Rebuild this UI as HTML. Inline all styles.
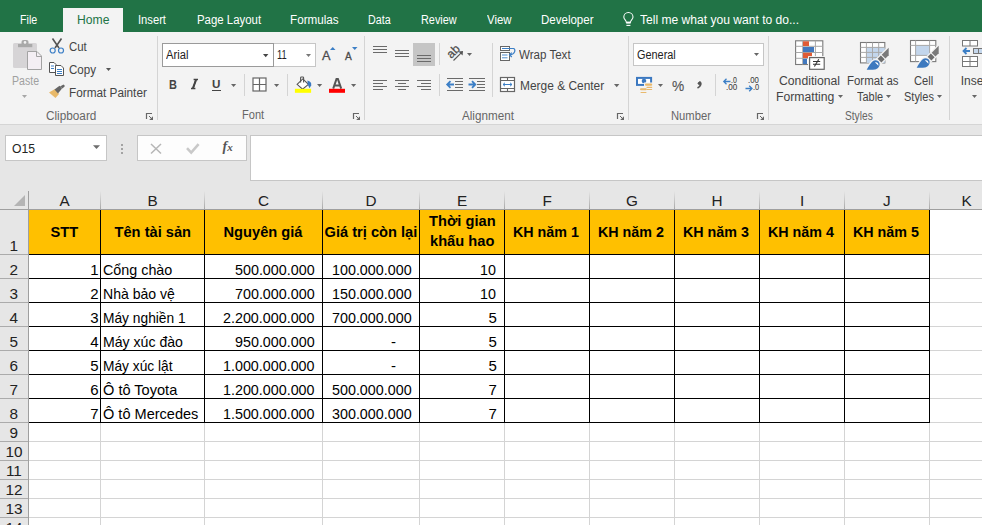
<!DOCTYPE html>
<html><head><meta charset="utf-8"><title>Excel</title><style>
*{margin:0;padding:0;box-sizing:border-box}
html,body{width:982px;height:525px;overflow:hidden;background:#fff;font-family:"Liberation Sans",sans-serif}
.a{position:absolute}
.t{position:absolute;white-space:pre;line-height:1}
svg{position:absolute;overflow:visible}
</style></head><body>
<div class="a" style="left:0px;top:0px;width:982px;height:32px;background:#217346;"></div><div class="a" style="left:63px;top:8px;width:60px;height:24px;background:#f3f3f3;"></div><div class="t" style="left:20.40px;top:13.84px;font-size:12px;color:#fff;transform:scaleX(0.8900);transform-origin:0 0;">File</div><div class="t" style="left:138.20px;top:13.84px;font-size:12px;color:#fff;transform:scaleX(0.9323);transform-origin:0 0;">Insert</div><div class="t" style="left:196.50px;top:13.84px;font-size:12px;color:#fff;transform:scaleX(0.9515);transform-origin:0 0;">Page Layout</div><div class="t" style="left:290.30px;top:13.84px;font-size:12px;color:#fff;transform:scaleX(0.9740);transform-origin:0 0;">Formulas</div><div class="t" style="left:368.00px;top:13.84px;font-size:12px;color:#fff;transform:scaleX(0.8923);transform-origin:0 0;">Data</div><div class="t" style="left:421.40px;top:13.84px;font-size:12px;color:#fff;transform:scaleX(0.9075);transform-origin:0 0;">Review</div><div class="t" style="left:487.30px;top:13.84px;font-size:12px;color:#fff;transform:scaleX(0.9500);transform-origin:0 0;">View</div><div class="t" style="left:541.00px;top:13.84px;font-size:12px;color:#fff;transform:scaleX(0.9600);transform-origin:0 0;">Developer</div><div class="t" style="left:76.60px;top:13.84px;font-size:12px;color:#217346;transform:scaleX(1.0125);transform-origin:0 0;">Home</div><div class="t" style="left:640.00px;top:13.84px;font-size:12px;color:#fff;transform:scaleX(1.0063);transform-origin:0 0;">Tell me what you want to do...</div><svg style="left:622px;top:11px" width="13" height="16" viewBox="0 0 13 16"><path d="M4.3,11.2 C4.3,9.3 1.8,8.4 1.8,6 A4.6,4.6 0 1 1 11,6 C11,8.4 8.5,9.3 8.5,11.2 Z" fill="none" stroke="#fff" stroke-width="1.05"/><rect x="4.2" y="10.8" width="4.4" height="1.8" fill="#fff"/><path d="M4.4,14.4 H8.4" stroke="#fff" stroke-width="1.1"/></svg><div class="a" style="left:0px;top:32px;width:982px;height:92px;background:#f3f3f3;"></div><div class="a" style="left:0px;top:124px;width:982px;height:1px;background:#d5d5d5;"></div><div class="a" style="left:157px;top:36px;width:1px;height:84px;background:#d4d4d4;"></div><div class="a" style="left:364px;top:36px;width:1px;height:84px;background:#d4d4d4;"></div><div class="a" style="left:628px;top:36px;width:1px;height:84px;background:#d4d4d4;"></div><div class="a" style="left:768px;top:36px;width:1px;height:84px;background:#d4d4d4;"></div><div class="a" style="left:949px;top:36px;width:1px;height:84px;background:#d4d4d4;"></div><svg style="left:12px;top:39px" width="31" height="32" viewBox="0 0 31 32"><rect x="1" y="4" width="24" height="25" rx="1.5" fill="#d6d4d6"/><rect x="9.5" y="1" width="7" height="6" rx="2" fill="#a9a9a9"/><rect x="6" y="5" width="14.3" height="3.2" fill="#a9a9a9"/><circle cx="13" cy="3.4" r="1.3" fill="#f3f3f3"/><path d="M15.5,12.5 H25 L29.5,17 V30.5 H15.5 Z" fill="#f4eff4" stroke="#a3a3a3" stroke-width="1"/><path d="M24.5,12.5 V17.5 H29.5" fill="none" stroke="#a3a3a3" stroke-width="1"/></svg><div class="t" style="left:11.70px;top:74.84px;font-size:12px;color:#a0a0a0;transform:scaleX(0.8806);transform-origin:0 0;">Paste</div><svg style="left:22px;top:95px" width="6" height="4.0" viewBox="0 0 6 4.0"><polygon points="0,0 5,0 2.5,3.0" fill="#a6a6a6"/></svg><svg style="left:49px;top:37px" width="16" height="17" viewBox="0 0 16 17"><path d="M3.5,1.5 L10,11 M12.5,1.5 L6,11" stroke="#555" stroke-width="1.6" fill="none"/><circle cx="3.7" cy="13.5" r="2.5" fill="none" stroke="#3c7fc6" stroke-width="1.2"/><circle cx="12" cy="13.5" r="2.5" fill="none" stroke="#3c7fc6" stroke-width="1.2"/></svg><div class="t" style="left:68.70px;top:40.84px;font-size:12px;color:#444;transform:scaleX(0.9526);transform-origin:0 0;">Cut</div><svg style="left:49px;top:62px" width="16" height="15" viewBox="0 0 16 15"><path d="M0.5,0.5 H5 L7,2.5 V10.5 H0.5 Z" fill="#fff" stroke="#555" stroke-width="1"/><path d="M6.5,3.5 H12 L14.5,6 V13.5 H6.5 Z" fill="#fff" stroke="#555" stroke-width="1"/><path d="M2,4 H5 M2,6.5 H5 M8,7.5 H13 M8,9.5 H13 M8,11.5 H13" stroke="#3c7fc6" stroke-width="1"/></svg><div class="t" style="left:68.70px;top:64.24px;font-size:12px;color:#444;transform:scaleX(0.9643);transform-origin:0 0;">Copy</div><svg style="left:106px;top:68px" width="6" height="4.0" viewBox="0 0 6 4.0"><polygon points="0,0 5,0 2.5,3.0" fill="#555"/></svg><svg style="left:48px;top:84px" width="18" height="15" viewBox="0 0 18 15"><path d="M1,8.5 L7,5 L11,10 L7.5,14 Z" fill="#e8b96a"/><path d="M6.5,5.5 L11.5,1.8 L14,4.5 L10,9.5 Z" fill="#666"/><path d="M12,2.5 L15.5,0.5 L17,2 L14.5,4.5 Z" fill="#666"/></svg><div class="t" style="left:68.70px;top:86.54px;font-size:12px;color:#444;transform:scaleX(0.9810);transform-origin:0 0;">Format Painter</div><div class="t" style="left:45.70px;top:109.84px;font-size:12px;color:#666;transform:scaleX(0.9804);transform-origin:0 0;">Clipboard</div><svg style="left:146px;top:113px" width="8" height="8" viewBox="0 0 8 8"><path d="M0.5,6 V0.5 H6" stroke="#666" stroke-width="1.2" fill="none"/><polygon points="7,3.2 7,7 3.2,7" fill="#666"/><path d="M3,3 L6,6" stroke="#666" stroke-width="1"/></svg><div class="a" style="left:162px;top:43px;width:112px;height:24px;background:#fff;border:1px solid #9a9a9a;"></div><div class="t" style="left:165.80px;top:49.04px;font-size:12px;color:#222;transform:scaleX(0.9333);transform-origin:0 0;">Arial</div><svg style="left:262.7px;top:53.6px" width="6.4" height="4.2" viewBox="0 0 6.4 4.2"><polygon points="0,0 5.4,0 2.7,3.2" fill="#444"/></svg><div class="a" style="left:274px;top:43px;width:42px;height:24px;background:#fff;border:1px solid #c6c6c6;border-left:none;"></div><div class="t" style="left:276.90px;top:49.04px;font-size:12px;color:#222;transform:scaleX(0.7769);transform-origin:0 0;">11</div><svg style="left:305.7px;top:53.6px" width="6" height="4.0" viewBox="0 0 6 4.0"><polygon points="0,0 5,0 2.5,3.0" fill="#777"/></svg><div class="t" style="left:322.40px;top:48.80px;font-size:13px;color:#4a4a4a;transform:scaleX(0.9778);transform-origin:0 0;-webkit-text-stroke:0.3px #4a4a4a;">A</div><svg style="left:329.5px;top:47px" width="6" height="4" viewBox="0 0 6 4"><polygon points="0,3 5.5,3 2.75,0" fill="#3c7fc6"/></svg><div class="t" style="left:344.80px;top:51.41px;font-size:10.5px;color:#4a4a4a;transform:scaleX(0.9625);transform-origin:0 0;-webkit-text-stroke:0.3px #4a4a4a;">A</div><svg style="left:351.5px;top:47px" width="6" height="4" viewBox="0 0 6 4"><polygon points="0,0 5.5,0 2.75,3" fill="#3c7fc6"/></svg><div class="t" style="left:168.70px;top:78.10px;font-size:13px;color:#444;font-weight:bold;transform:scaleX(0.8444);transform-origin:0 0;">B</div><svg style="left:190px;top:79px" width="9" height="11" viewBox="0 0 9 11"><path d="M3.6,0.5 H8 M1,9.5 H5.4 M6,0.8 L3,9.2" stroke="#444" stroke-width="1.3" fill="none"/><path d="M6,0.8 L3,9.2" stroke="#444" stroke-width="2" fill="none"/></svg><div class="t" style="left:212.40px;top:78.87px;font-size:11.5px;color:#444;font-weight:bold;transform:scaleX(1.0125);transform-origin:0 0;">U</div><div class="a" style="left:212px;top:90px;width:9px;height:1px;background:#444;"></div><svg style="left:230.8px;top:84px" width="6.2" height="4.1" viewBox="0 0 6.2 4.1"><polygon points="0,0 5.2,0 2.6,3.1" fill="#666"/></svg><div class="a" style="left:244px;top:74px;width:1px;height:22px;background:#d4d4d4;"></div><svg style="left:252px;top:77px" width="15" height="15" viewBox="0 0 15 15"><rect x="1" y="1" width="13" height="13" fill="#fff" stroke="#666" stroke-width="1.2"/><path d="M7.5,1 V14 M1,7.5 H14" stroke="#666" stroke-width="1.2"/></svg><svg style="left:274px;top:84.4px" width="6.2" height="4.1" viewBox="0 0 6.2 4.1"><polygon points="0,0 5.2,0 2.6,3.1" fill="#666"/></svg><div class="a" style="left:287px;top:74px;width:1px;height:22px;background:#d4d4d4;"></div><svg style="left:292px;top:74px" width="54" height="20" viewBox="0 0 54 20"><path d="M5.1,10.3 L10.8,4.9 L16.4,10.3 L10.6,15.2 Z" fill="#fff" stroke="#555" stroke-width="1.1"/><path d="M8.6,8.6 V3.8 Q8.6,3 9.4,3 H10.8 Q11.6,3 11.6,3.8 V8.6" fill="none" stroke="#555" stroke-width="1.1"/><path d="M15.4,6.6 Q19.8,7.6 19.2,11.2 L17.6,14.3 L15.8,10.8 Z" fill="#3b78c0"/><rect x="2.9" y="14.8" width="16.2" height="4" fill="#ffff00"/><path d="M41.2,14.6 L44.5,5 H45.9 L49.2,14.6 M42.8,11.4 H47.6" fill="none" stroke="#555" stroke-width="2"/><rect x="37" y="14.8" width="16" height="4" fill="#ff0000"/></svg><svg style="left:317px;top:84.4px" width="6.2" height="4.1" viewBox="0 0 6.2 4.1"><polygon points="0,0 5.2,0 2.6,3.1" fill="#666"/></svg><svg style="left:350.7px;top:84.4px" width="6.2" height="4.1" viewBox="0 0 6.2 4.1"><polygon points="0,0 5.2,0 2.6,3.1" fill="#666"/></svg><div class="t" style="left:241.50px;top:109.44px;font-size:12px;color:#666;transform:scaleX(0.9200);transform-origin:0 0;">Font</div><svg style="left:353px;top:113px" width="8" height="8" viewBox="0 0 8 8"><path d="M0.5,6 V0.5 H6" stroke="#666" stroke-width="1.2" fill="none"/><polygon points="7,3.2 7,7 3.2,7" fill="#666"/><path d="M3,3 L6,6" stroke="#666" stroke-width="1"/></svg><div class="a" style="left:373px;top:46px;width:14px;height:1px;background:#6a6a6a;"></div><div class="a" style="left:373px;top:49px;width:14px;height:1px;background:#6a6a6a;"></div><div class="a" style="left:373px;top:52px;width:14px;height:1px;background:#6a6a6a;"></div><div class="a" style="left:395px;top:50px;width:14px;height:1px;background:#6a6a6a;"></div><div class="a" style="left:395px;top:53px;width:14px;height:1px;background:#6a6a6a;"></div><div class="a" style="left:395px;top:56px;width:14px;height:1px;background:#6a6a6a;"></div><div class="a" style="left:413px;top:43px;width:22px;height:23px;background:#c5c5c5;"></div><div class="a" style="left:417px;top:55px;width:14px;height:1px;background:#6a6a6a;"></div><div class="a" style="left:417px;top:58px;width:14px;height:1px;background:#6a6a6a;"></div><div class="a" style="left:417px;top:61px;width:14px;height:1px;background:#6a6a6a;"></div><div class="a" style="left:439px;top:43px;width:1px;height:22px;background:#d4d4d4;"></div><svg style="left:445px;top:45px" width="20" height="18" viewBox="0 0 20 18"><text x="0" y="0" transform="translate(6.3,14) rotate(-45)" font-family="Liberation Sans" font-size="12" fill="#4a4a4a" stroke="#4a4a4a" stroke-width="0.25">ab</text><path d="M8.5,15.5 L16.2,7.8" stroke="#555" stroke-width="1.1" fill="none"/><polygon points="18,6 17.6,10.6 13.4,6.4" fill="#555"/></svg><svg style="left:467px;top:53px" width="6" height="4.0" viewBox="0 0 6 4.0"><polygon points="0,0 5,0 2.5,3.0" fill="#666"/></svg><div class="a" style="left:373px;top:80px;width:14px;height:1px;background:#6a6a6a;"></div><div class="a" style="left:373px;top:83px;width:10px;height:1px;background:#6a6a6a;"></div><div class="a" style="left:373px;top:86px;width:14px;height:1px;background:#6a6a6a;"></div><div class="a" style="left:373px;top:89px;width:10px;height:1px;background:#6a6a6a;"></div><div class="a" style="left:395px;top:80px;width:14px;height:1px;background:#6a6a6a;"></div><div class="a" style="left:398px;top:83px;width:8px;height:1px;background:#6a6a6a;"></div><div class="a" style="left:395px;top:86px;width:14px;height:1px;background:#6a6a6a;"></div><div class="a" style="left:398px;top:89px;width:8px;height:1px;background:#6a6a6a;"></div><div class="a" style="left:417px;top:80px;width:14px;height:1px;background:#6a6a6a;"></div><div class="a" style="left:421px;top:83px;width:10px;height:1px;background:#6a6a6a;"></div><div class="a" style="left:417px;top:86px;width:14px;height:1px;background:#6a6a6a;"></div><div class="a" style="left:421px;top:89px;width:10px;height:1px;background:#6a6a6a;"></div><div class="a" style="left:439px;top:74px;width:1px;height:22px;background:#d4d4d4;"></div><div class="a" style="left:447px;top:78px;width:16px;height:1px;background:#6a6a6a;"></div><div class="a" style="left:447px;top:90px;width:16px;height:1px;background:#6a6a6a;"></div><div class="a" style="left:455px;top:81px;width:8px;height:1px;background:#6a6a6a;"></div><div class="a" style="left:455px;top:84px;width:8px;height:1px;background:#6a6a6a;"></div><div class="a" style="left:455px;top:87px;width:8px;height:1px;background:#6a6a6a;"></div><svg style="left:446px;top:80px" width="9" height="9" viewBox="0 0 9 9"><path d="M1.2,4.5 H8 M4.5,1.2 L1.2,4.5 L4.5,7.8" stroke="#3c7fc6" stroke-width="1.8" fill="none"/></svg><div class="a" style="left:469px;top:78px;width:16px;height:1px;background:#6a6a6a;"></div><div class="a" style="left:469px;top:90px;width:16px;height:1px;background:#6a6a6a;"></div><div class="a" style="left:477px;top:81px;width:8px;height:1px;background:#6a6a6a;"></div><div class="a" style="left:477px;top:84px;width:8px;height:1px;background:#6a6a6a;"></div><div class="a" style="left:477px;top:87px;width:8px;height:1px;background:#6a6a6a;"></div><svg style="left:468px;top:80px" width="9" height="9" viewBox="0 0 9 9"><path d="M0.5,4.5 H7.3 M4,1.2 L7.3,4.5 L4,7.8" stroke="#3c7fc6" stroke-width="1.8" fill="none"/></svg><div class="a" style="left:492px;top:43px;width:1px;height:54px;background:#d4d4d4;"></div><svg style="left:499px;top:45px" width="17" height="17" viewBox="0 0 17 17"><rect x="1.5" y="1.5" width="9" height="4" fill="#fff" stroke="#666" stroke-width="1"/><rect x="1.5" y="7.5" width="9" height="8" fill="#fff" stroke="#666" stroke-width="1"/><path d="M3,3.5 H15" stroke="#3c7fc6" stroke-width="1"/><path d="M3,10 H8.5 M3,12.8 H8.5" stroke="#3c7fc6" stroke-width="0.9"/><path d="M14.8,3.5 C16.5,4.5 16.5,9.5 11,9.8" stroke="#3c7fc6" stroke-width="1.2" fill="none"/><path d="M12.8,7.6 L10.5,9.8 L12.8,12" stroke="#3c7fc6" stroke-width="1.2" fill="none"/></svg><div class="t" style="left:519.00px;top:49.34px;font-size:12px;color:#444;transform:scaleX(0.9630);transform-origin:0 0;">Wrap Text</div><svg style="left:499px;top:76px" width="17" height="17" viewBox="0 0 17 17"><rect x="1.5" y="1.5" width="14" height="14" fill="#fff" stroke="#666" stroke-width="1.2"/><path d="M1.5,4.5 H15.5 M1.5,12.5 H15.5 M8.5,1.5 V4.5 M8.5,12.5 V15.5" stroke="#666" stroke-width="1.1"/><path d="M4,8.5 H13 M6,6.8 L4,8.5 L6,10.2 M11,6.8 L13,8.5 L11,10.2" stroke="#3c7fc6" stroke-width="1" fill="none"/></svg><div class="t" style="left:519.50px;top:80.44px;font-size:12px;color:#444;transform:scaleX(0.9941);transform-origin:0 0;">Merge & Center</div><svg style="left:613.7px;top:83.6px" width="6.4" height="4.2" viewBox="0 0 6.4 4.2"><polygon points="0,0 5.4,0 2.7,3.2" fill="#666"/></svg><div class="t" style="left:462.30px;top:109.84px;font-size:12px;color:#666;transform:scaleX(0.9722);transform-origin:0 0;">Alignment</div><svg style="left:617px;top:113px" width="8" height="8" viewBox="0 0 8 8"><path d="M0.5,6 V0.5 H6" stroke="#666" stroke-width="1.2" fill="none"/><polygon points="7,3.2 7,7 3.2,7" fill="#666"/><path d="M3,3 L6,6" stroke="#666" stroke-width="1"/></svg><div class="a" style="left:633px;top:43px;width:131px;height:23px;background:#fff;border:1px solid #c6c6c6;"></div><div class="t" style="left:636.50px;top:48.84px;font-size:12px;color:#222;transform:scaleX(0.9070);transform-origin:0 0;">General</div><svg style="left:754px;top:52.8px" width="6" height="4.0" viewBox="0 0 6 4.0"><polygon points="0,0 5,0 2.5,3.0" fill="#666"/></svg><svg style="left:632px;top:72px" width="24" height="24" viewBox="0 0 24 24"><rect x="5" y="5.9" width="14.1" height="7" fill="#fff" stroke="#3b78c0" stroke-width="2"/><circle cx="12" cy="9" r="2.3" fill="#3b78c0"/><rect x="12" y="10.5" width="10" height="11" fill="#f3f3f3"/><rect x="7" y="15" width="9" height="7" fill="#f3f3f3"/><rect x="13" y="11.6" width="7.2" height="2.2" rx="1" fill="#e9b96c"/><rect x="14.5" y="14.8" width="5.7" height="1.2" rx="0.5" fill="#e9b96c"/><rect x="14.5" y="16.9" width="5.7" height="1.2" rx="0.5" fill="#e9b96c"/><rect x="8" y="16.2" width="6.8" height="2.1" rx="1" fill="#e9b96c"/><rect x="8.5" y="19.9" width="6" height="1.2" rx="0.5" fill="#e9b96c"/></svg><svg style="left:658.2px;top:83.7px" width="6" height="4.0" viewBox="0 0 6 4.0"><polygon points="0,0 5,0 2.5,3.0" fill="#666"/></svg><div class="t" style="left:672.30px;top:78.18px;font-size:15.5px;color:#555;transform:scaleX(0.8857);transform-origin:0 0;-webkit-text-stroke:0.15px #555;">%</div><svg style="left:696px;top:81px" width="7" height="8" viewBox="0 0 7 8"><path d="M3.2,1 Q5.5,1.5 4.5,4 Q3.8,6 1.5,7" stroke="#555" stroke-width="1.8" fill="none"/><circle cx="3.3" cy="2.3" r="1.6" fill="#555"/></svg><div class="a" style="left:715px;top:74px;width:1px;height:22px;background:#d4d4d4;"></div><div class="t" style="left:731.00px;top:76.08px;font-size:9px;color:#444;transform:scaleX(0.7750);transform-origin:0 0;-webkit-text-stroke:0.1px #444;">.0</div><div class="t" style="left:725.50px;top:83.28px;font-size:9px;color:#444;transform:scaleX(0.9000);transform-origin:0 0;-webkit-text-stroke:0.1px #444;">.00</div><svg style="left:722.5px;top:78px" width="8" height="7" viewBox="0 0 8 7"><path d="M0.8,3.5 H7.5 M3.5,0.8 L0.8,3.5 L3.5,6.2" stroke="#3c7fc6" stroke-width="1.3" fill="none"/></svg><div class="t" style="left:748.00px;top:76.08px;font-size:9px;color:#444;transform:scaleX(0.8615);transform-origin:0 0;-webkit-text-stroke:0.1px #444;">.00</div><div class="t" style="left:752.60px;top:83.28px;font-size:9px;color:#444;transform:scaleX(0.8250);transform-origin:0 0;-webkit-text-stroke:0.1px #444;">.0</div><svg style="left:745px;top:85px" width="8" height="7" viewBox="0 0 8 7"><path d="M0.5,3.5 H7 M4.2,0.8 L7,3.5 L4.2,6.2" stroke="#3c7fc6" stroke-width="1.3" fill="none"/></svg><div class="t" style="left:670.70px;top:109.84px;font-size:12px;color:#666;transform:scaleX(0.9349);transform-origin:0 0;">Number</div><svg style="left:757px;top:113px" width="8" height="8" viewBox="0 0 8 8"><path d="M0.5,6 V0.5 H6" stroke="#666" stroke-width="1.2" fill="none"/><polygon points="7,3.2 7,7 3.2,7" fill="#666"/><path d="M3,3 L6,6" stroke="#666" stroke-width="1"/></svg><svg style="left:790px;top:36px" width="36" height="36" viewBox="0 0 36 36"><rect x="5.6" y="4.8" width="27.2" height="23.7" fill="#fff" stroke="#7a7a7a" stroke-width="1.1"/><path d="M12.7,4.8 V28.5 M25.4,4.8 V28.5 M5.6,10.3 H32.8 M5.6,16.5 H32.8 M5.6,22.3 H32.8" stroke="#a8a8a8" stroke-width="1"/><rect x="13" y="5.3" width="6" height="4.7" fill="#df5b35"/><rect x="13" y="11" width="11" height="5" fill="#4178be"/><rect x="13" y="16.8" width="9" height="5.2" fill="#df5b35"/><rect x="13" y="22.8" width="4" height="5.2" fill="#4178be"/><rect x="18" y="20.1" width="17.6" height="14.7" fill="#f3f3f3"/><rect x="19.6" y="21.6" width="14.6" height="11.7" fill="#fff" stroke="#666" stroke-width="1.2"/><path d="M23,25.5 H30.2 M23,28.3 H30.2" stroke="#333" stroke-width="1.1"/><path d="M28.8,23.3 L24.4,30.5" stroke="#333" stroke-width="1.1"/></svg><div class="t" style="left:778.70px;top:74.84px;font-size:12px;color:#444;transform:scaleX(1.0167);transform-origin:0 0;">Conditional</div><div class="t" style="left:775.60px;top:90.84px;font-size:12px;color:#444;transform:scaleX(1.0175);transform-origin:0 0;">Formatting</div><svg style="left:837.5px;top:95px" width="6" height="4.0" viewBox="0 0 6 4.0"><polygon points="0,0 5,0 2.5,3.0" fill="#666"/></svg><svg style="left:856px;top:38px" width="38" height="34" viewBox="0 0 38 34"><rect x="4.5" y="4.5" width="24.3" height="20.4" fill="#fff" stroke="#7a7a7a" stroke-width="1.1"/><rect x="10.4" y="9.4" width="18.4" height="15.5" fill="#c3d6ec"/><path d="M10.4,4.5 V24.9 M16.5,4.5 V24.9 M22.7,4.5 V24.9 M4.5,9.4 H28.8 M4.5,14.4 H28.8 M4.5,19.4 H28.8" stroke="#a8a8a8" stroke-width="1"/><g stroke="#f3f3f3" stroke-width="2.6" fill="#f3f3f3"><path d="M32.7,9.7 V17.2 L29.45,20.45 L25.7,16.7 Z"/><path d="M24.9,17.5 L28.65,21.25 L25.4,24.5 L21.65,20.75 Z"/><path d="M10.7,31.7 C12.5,28.5 14.5,25 17,23 C19.5,21.5 23,22.5 23.6,25.5 C24,28.5 21.5,31 19,31.4 C16,31.7 13,31.7 10.7,31.7 Z"/></g><path d="M32.7,9.7 V17.2 L29.45,20.45 L25.7,16.7 Z" fill="#7a7a7a"/><path d="M24.9,17.5 L28.65,21.25 L25.4,24.5 L21.65,20.75 Z" fill="#6e6e6e"/><path d="M10.7,31.7 C12.5,28.5 14.5,25 17,23 C19.5,21.5 23,22.5 23.6,25.5 C24,28.5 21.5,31 19,31.4 C16,31.7 13,31.7 10.7,31.7 Z" fill="#3d79bf"/><path d="M19,24.4 C21,23.8 22.8,25 22.4,27.8 C21.6,26.6 20.5,25.6 19,24.4 Z" fill="#fff"/></svg><div class="t" style="left:847.20px;top:74.84px;font-size:12px;color:#444;transform:scaleX(0.9537);transform-origin:0 0;">Format as</div><div class="t" style="left:856.70px;top:90.84px;font-size:12px;color:#444;transform:scaleX(0.9138);transform-origin:0 0;">Table</div><svg style="left:886px;top:95px" width="6" height="4.0" viewBox="0 0 6 4.0"><polygon points="0,0 5,0 2.5,3.0" fill="#666"/></svg><svg style="left:906px;top:36px" width="38" height="34" viewBox="0 0 38 34"><rect x="4.5" y="4.5" width="25.3" height="21.1" fill="#fff" stroke="#7a7a7a" stroke-width="1.1"/><rect x="9.6" y="9.4" width="14" height="10" fill="#c3d6ec"/><path d="M9.6,4.5 V25.6 M23.6,4.5 V25.6 M4.5,9.4 H29.8 M4.5,19.4 H29.8" stroke="#a8a8a8" stroke-width="1"/><g stroke="#f3f3f3" stroke-width="2.6" fill="#f3f3f3"><path d="M32.7,9.7 V17.2 L29.45,20.45 L25.7,16.7 Z"/><path d="M24.9,17.5 L28.65,21.25 L25.4,24.5 L21.65,20.75 Z"/><path d="M10.7,31.7 C12.5,28.5 14.5,25 17,23 C19.5,21.5 23,22.5 23.6,25.5 C24,28.5 21.5,31 19,31.4 C16,31.7 13,31.7 10.7,31.7 Z"/></g><path d="M32.7,9.7 V17.2 L29.45,20.45 L25.7,16.7 Z" fill="#7a7a7a"/><path d="M24.9,17.5 L28.65,21.25 L25.4,24.5 L21.65,20.75 Z" fill="#6e6e6e"/><path d="M10.7,31.7 C12.5,28.5 14.5,25 17,23 C19.5,21.5 23,22.5 23.6,25.5 C24,28.5 21.5,31 19,31.4 C16,31.7 13,31.7 10.7,31.7 Z" fill="#3d79bf"/><path d="M19,24.4 C21,23.8 22.8,25 22.4,27.8 C21.6,26.6 20.5,25.6 19,24.4 Z" fill="#fff"/></svg><div class="t" style="left:913.50px;top:74.84px;font-size:12px;color:#444;transform:scaleX(0.9286);transform-origin:0 0;">Cell</div><div class="t" style="left:903.80px;top:90.84px;font-size:12px;color:#444;transform:scaleX(0.9152);transform-origin:0 0;">Styles</div><svg style="left:936.5px;top:95px" width="6" height="4.0" viewBox="0 0 6 4.0"><polygon points="0,0 5,0 2.5,3.0" fill="#666"/></svg><div class="t" style="left:844.60px;top:109.54px;font-size:12px;color:#666;transform:scaleX(0.8485);transform-origin:0 0;">Styles</div><svg style="left:962px;top:40px" width="24" height="28" viewBox="0 0 24 28"><rect x="0.5" y="0.5" width="15" height="5.5" fill="#fff" stroke="#777" stroke-width="1"/><path d="M8,0.5 V6" stroke="#777"/><rect x="11.5" y="8.5" width="12" height="5" fill="#c5d7ec" stroke="#777" stroke-width="1"/><path d="M16.5,8.5 V13.5" stroke="#777"/><path d="M1.5,11 H8 M4.5,8 L1.5,11 L4.5,14" stroke="#3c7fc6" stroke-width="1.8" fill="none"/><rect x="0.5" y="16.5" width="15" height="10" fill="#fff" stroke="#777" stroke-width="1"/><path d="M8,16.5 V26.5 M0.5,21.5 H15.5" stroke="#777"/></svg><div class="t" style="left:960.70px;top:74.84px;font-size:12px;color:#444;">Insert</div><svg style="left:972.3px;top:95px" width="6" height="4.0" viewBox="0 0 6 4.0"><polygon points="0,0 5,0 2.5,3.0" fill="#666"/></svg><div class="a" style="left:0px;top:125px;width:982px;height:66px;background:#e6e6e6;"></div><div class="a" style="left:5px;top:135px;width:102px;height:26px;background:#fff;border:1px solid #c6c6c6;"></div><div class="t" style="left:12.30px;top:142.84px;font-size:12px;color:#222;transform:scaleX(1.0130);transform-origin:0 0;">O15</div><svg style="left:93px;top:145px" width="8" height="5" viewBox="0 0 8 5"><polygon points="0,0.3 7,0.3 3.5,4" fill="#6d6d6d"/></svg><div class="a" style="left:121px;top:143.5px;width:2px;height:2px;background:#a3a3a3;"></div><div class="a" style="left:121px;top:147.5px;width:2px;height:2px;background:#a3a3a3;"></div><div class="a" style="left:121px;top:151.5px;width:2px;height:2px;background:#a3a3a3;"></div><div class="a" style="left:137px;top:135px;width:110px;height:26px;background:#fdfdfd;border:1px solid #c6c6c6;"></div><svg style="left:150px;top:143px" width="12" height="11" viewBox="0 0 12 11"><path d="M1,1 L11,10.5 M11,1 L1,10.5" stroke="#b6b6b6" stroke-width="1.5" fill="none"/></svg><svg style="left:186px;top:143px" width="13" height="11" viewBox="0 0 13 11"><path d="M1,5.2 L5.2,9.6 L12.6,1.2" stroke="#c9c9c9" stroke-width="2.6" fill="none"/></svg><div class="t" style="left:222.5px;top:140px;font-family:'Liberation Serif',serif;font-style:italic;font-weight:bold;font-size:14px;color:#555">f<span style="font-size:11px;position:relative;left:0px">x</span></div><div class="a" style="left:250px;top:135px;width:740px;height:46px;background:#fff;border:1px solid #c6c6c6;"></div><div class="a" style="left:0px;top:181px;width:982px;height:29px;background:#e6e6e6;"></div><div class="a" style="left:0px;top:181px;width:29px;height:344px;background:#e6e6e6;"></div><div class="a" style="left:29px;top:210px;width:953px;height:315px;background:#fff;"></div><div class="a" style="left:29px;top:210px;width:900px;height:44px;background:#ffc000;"></div><div class="a" style="left:100px;top:210px;width:1px;height:315px;background:#d4d4d4;"></div><div class="a" style="left:204px;top:210px;width:1px;height:315px;background:#d4d4d4;"></div><div class="a" style="left:322px;top:210px;width:1px;height:315px;background:#d4d4d4;"></div><div class="a" style="left:419px;top:210px;width:1px;height:315px;background:#d4d4d4;"></div><div class="a" style="left:504px;top:210px;width:1px;height:315px;background:#d4d4d4;"></div><div class="a" style="left:589px;top:210px;width:1px;height:315px;background:#d4d4d4;"></div><div class="a" style="left:674px;top:210px;width:1px;height:315px;background:#d4d4d4;"></div><div class="a" style="left:759px;top:210px;width:1px;height:315px;background:#d4d4d4;"></div><div class="a" style="left:844px;top:210px;width:1px;height:315px;background:#d4d4d4;"></div><div class="a" style="left:929px;top:210px;width:1px;height:315px;background:#d4d4d4;"></div><div class="a" style="left:29px;top:254px;width:953px;height:1px;background:#d4d4d4;"></div><div class="a" style="left:29px;top:278px;width:953px;height:1px;background:#d4d4d4;"></div><div class="a" style="left:29px;top:302px;width:953px;height:1px;background:#d4d4d4;"></div><div class="a" style="left:29px;top:326px;width:953px;height:1px;background:#d4d4d4;"></div><div class="a" style="left:29px;top:350px;width:953px;height:1px;background:#d4d4d4;"></div><div class="a" style="left:29px;top:374px;width:953px;height:1px;background:#d4d4d4;"></div><div class="a" style="left:29px;top:398px;width:953px;height:1px;background:#d4d4d4;"></div><div class="a" style="left:29px;top:422px;width:953px;height:1px;background:#d4d4d4;"></div><div class="a" style="left:29px;top:441px;width:953px;height:1px;background:#d4d4d4;"></div><div class="a" style="left:29px;top:460px;width:953px;height:1px;background:#d4d4d4;"></div><div class="a" style="left:29px;top:479px;width:953px;height:1px;background:#d4d4d4;"></div><div class="a" style="left:29px;top:498px;width:953px;height:1px;background:#d4d4d4;"></div><div class="a" style="left:29px;top:517px;width:953px;height:1px;background:#d4d4d4;"></div><div class="a" style="left:29px;top:536px;width:953px;height:1px;background:#d4d4d4;"></div><div class="a" style="left:100px;top:210px;width:1px;height:213px;background:#000;"></div><div class="a" style="left:204px;top:210px;width:1px;height:213px;background:#000;"></div><div class="a" style="left:322px;top:210px;width:1px;height:213px;background:#000;"></div><div class="a" style="left:419px;top:210px;width:1px;height:213px;background:#000;"></div><div class="a" style="left:504px;top:210px;width:1px;height:213px;background:#000;"></div><div class="a" style="left:589px;top:210px;width:1px;height:213px;background:#000;"></div><div class="a" style="left:674px;top:210px;width:1px;height:213px;background:#000;"></div><div class="a" style="left:759px;top:210px;width:1px;height:213px;background:#000;"></div><div class="a" style="left:844px;top:210px;width:1px;height:213px;background:#000;"></div><div class="a" style="left:929px;top:210px;width:1px;height:213px;background:#000;"></div><div class="a" style="left:29px;top:254px;width:901px;height:1px;background:#000;"></div><div class="a" style="left:29px;top:278px;width:901px;height:1px;background:#000;"></div><div class="a" style="left:29px;top:302px;width:901px;height:1px;background:#000;"></div><div class="a" style="left:29px;top:326px;width:901px;height:1px;background:#000;"></div><div class="a" style="left:29px;top:350px;width:901px;height:1px;background:#000;"></div><div class="a" style="left:29px;top:374px;width:901px;height:1px;background:#000;"></div><div class="a" style="left:29px;top:398px;width:901px;height:1px;background:#000;"></div><div class="a" style="left:29px;top:422px;width:901px;height:1px;background:#000;"></div><div class="a" style="left:0px;top:209px;width:982px;height:1px;background:#9f9f9f;"></div><div class="a" style="left:28px;top:191px;width:1px;height:334px;background:#9f9f9f;"></div><div class="a" style="left:100px;top:191px;width:1px;height:18px;background:linear-gradient(#e6e6e6,#a8a8a8);"></div><div class="a" style="left:204px;top:191px;width:1px;height:18px;background:linear-gradient(#e6e6e6,#a8a8a8);"></div><div class="a" style="left:322px;top:191px;width:1px;height:18px;background:linear-gradient(#e6e6e6,#a8a8a8);"></div><div class="a" style="left:419px;top:191px;width:1px;height:18px;background:linear-gradient(#e6e6e6,#a8a8a8);"></div><div class="a" style="left:504px;top:191px;width:1px;height:18px;background:linear-gradient(#e6e6e6,#a8a8a8);"></div><div class="a" style="left:589px;top:191px;width:1px;height:18px;background:linear-gradient(#e6e6e6,#a8a8a8);"></div><div class="a" style="left:674px;top:191px;width:1px;height:18px;background:linear-gradient(#e6e6e6,#a8a8a8);"></div><div class="a" style="left:759px;top:191px;width:1px;height:18px;background:linear-gradient(#e6e6e6,#a8a8a8);"></div><div class="a" style="left:844px;top:191px;width:1px;height:18px;background:linear-gradient(#e6e6e6,#a8a8a8);"></div><div class="a" style="left:929px;top:191px;width:1px;height:18px;background:linear-gradient(#e6e6e6,#a8a8a8);"></div><div class="a" style="left:0px;top:254px;width:28px;height:1px;background:#ababab;"></div><div class="a" style="left:0px;top:278px;width:28px;height:1px;background:#ababab;"></div><div class="a" style="left:0px;top:302px;width:28px;height:1px;background:#ababab;"></div><div class="a" style="left:0px;top:326px;width:28px;height:1px;background:#ababab;"></div><div class="a" style="left:0px;top:350px;width:28px;height:1px;background:#ababab;"></div><div class="a" style="left:0px;top:374px;width:28px;height:1px;background:#ababab;"></div><div class="a" style="left:0px;top:398px;width:28px;height:1px;background:#ababab;"></div><div class="a" style="left:0px;top:422px;width:28px;height:1px;background:#ababab;"></div><div class="a" style="left:0px;top:441px;width:28px;height:1px;background:#ababab;"></div><div class="a" style="left:0px;top:460px;width:28px;height:1px;background:#ababab;"></div><div class="a" style="left:0px;top:479px;width:28px;height:1px;background:#ababab;"></div><div class="a" style="left:0px;top:498px;width:28px;height:1px;background:#ababab;"></div><div class="a" style="left:0px;top:517px;width:28px;height:1px;background:#ababab;"></div><div class="a" style="left:0px;top:536px;width:28px;height:1px;background:#ababab;"></div><svg style="left:0px;top:181px" width="29" height="29" viewBox="0 0 29 29"><polygon points="25,14 25,25 14,25" fill="#b4b4b4"/></svg><div class="t" style="left:59.50px;top:193.05px;font-size:15.3px;color:#222;">A</div><div class="t" style="left:147.50px;top:193.05px;font-size:15.3px;color:#222;">B</div><div class="t" style="left:258.00px;top:193.05px;font-size:15.3px;color:#222;">C</div><div class="t" style="left:365.50px;top:193.05px;font-size:15.3px;color:#222;">D</div><div class="t" style="left:457.00px;top:193.05px;font-size:15.3px;color:#222;">E</div><div class="t" style="left:542.50px;top:193.05px;font-size:15.3px;color:#222;">F</div><div class="t" style="left:626.00px;top:193.05px;font-size:15.3px;color:#222;">G</div><div class="t" style="left:711.50px;top:193.05px;font-size:15.3px;color:#222;">H</div><div class="t" style="left:800.00px;top:193.05px;font-size:15.3px;color:#222;">I</div><div class="t" style="left:883.00px;top:193.05px;font-size:15.3px;color:#222;">J</div><div class="t" style="left:961.50px;top:193.05px;font-size:15.3px;color:#222;">K</div><div class="t" style="left:9.50px;top:238.05px;font-size:15.3px;color:#222;">1</div><div class="t" style="left:9.50px;top:262.05px;font-size:15.3px;color:#222;">2</div><div class="t" style="left:9.50px;top:286.05px;font-size:15.3px;color:#222;">3</div><div class="t" style="left:9.50px;top:310.05px;font-size:15.3px;color:#222;">4</div><div class="t" style="left:9.50px;top:334.05px;font-size:15.3px;color:#222;">5</div><div class="t" style="left:9.50px;top:358.05px;font-size:15.3px;color:#222;">6</div><div class="t" style="left:9.50px;top:382.05px;font-size:15.3px;color:#222;">7</div><div class="t" style="left:9.50px;top:406.05px;font-size:15.3px;color:#222;">8</div><div class="t" style="left:9.50px;top:425.05px;font-size:15.3px;color:#222;">9</div><div class="t" style="left:5.50px;top:444.05px;font-size:15.3px;color:#222;">10</div><div class="t" style="left:6.00px;top:463.05px;font-size:15.3px;color:#222;">11</div><div class="t" style="left:5.50px;top:482.05px;font-size:15.3px;color:#222;">12</div><div class="t" style="left:5.50px;top:501.05px;font-size:15.3px;color:#222;">13</div><div class="t" style="left:5.50px;top:520.05px;font-size:15.3px;color:#222;">14</div><div class="t" style="left:50.50px;top:224.58px;font-size:14.67px;color:#000;font-weight:bold;">STT</div><div class="t" style="left:114.50px;top:224.58px;font-size:14.67px;color:#000;font-weight:bold;">Tên tài sản</div><div class="t" style="left:223.50px;top:224.58px;font-size:14.67px;color:#000;font-weight:bold;">Nguyên giá</div><div class="t" style="left:324.50px;top:224.58px;font-size:14.67px;color:#000;font-weight:bold;">Giá trị còn lại</div><div class="t" style="left:513.05px;top:224.58px;font-size:14.67px;color:#000;font-weight:bold;transform:scaleX(0.9750);transform-origin:0 0;">KH năm 1</div><div class="t" style="left:598.05px;top:224.58px;font-size:14.67px;color:#000;font-weight:bold;transform:scaleX(0.9750);transform-origin:0 0;">KH năm 2</div><div class="t" style="left:683.05px;top:224.58px;font-size:14.67px;color:#000;font-weight:bold;transform:scaleX(0.9750);transform-origin:0 0;">KH năm 3</div><div class="t" style="left:768.05px;top:224.58px;font-size:14.67px;color:#000;font-weight:bold;transform:scaleX(0.9750);transform-origin:0 0;">KH năm 4</div><div class="t" style="left:853.05px;top:224.58px;font-size:14.67px;color:#000;font-weight:bold;transform:scaleX(0.9750);transform-origin:0 0;">KH năm 5</div><div class="t" style="left:429.00px;top:214.38px;font-size:14.67px;color:#000;font-weight:bold;">Thời gian</div><div class="t" style="left:430.00px;top:234.08px;font-size:14.67px;color:#000;font-weight:bold;">khấu hao</div><div class="t" style="left:90.20px;top:262.10px;font-size:15px;color:#000;">1</div><div class="t" style="left:103.40px;top:262.10px;font-size:15px;color:#000;transform:scaleX(0.9548);transform-origin:0 0;">Cổng chào</div><div class="t" style="left:235.30px;top:262.10px;font-size:15px;color:#000;transform:scaleX(0.9542);transform-origin:0 0;">500.000.000</div><div class="t" style="left:332.20px;top:262.10px;font-size:15px;color:#000;transform:scaleX(0.9542);transform-origin:0 0;">100.000.000</div><div class="t" style="left:480.28px;top:262.10px;font-size:15px;color:#000;transform:scaleX(0.9542);transform-origin:0 0;">10</div><div class="t" style="left:90.20px;top:286.10px;font-size:15px;color:#000;">2</div><div class="t" style="left:103.40px;top:286.10px;font-size:15px;color:#000;transform:scaleX(0.9377);transform-origin:0 0;">Nhà bảo vệ</div><div class="t" style="left:235.30px;top:286.10px;font-size:15px;color:#000;transform:scaleX(0.9542);transform-origin:0 0;">700.000.000</div><div class="t" style="left:332.20px;top:286.10px;font-size:15px;color:#000;transform:scaleX(0.9542);transform-origin:0 0;">150.000.000</div><div class="t" style="left:480.28px;top:286.10px;font-size:15px;color:#000;transform:scaleX(0.9542);transform-origin:0 0;">10</div><div class="t" style="left:90.20px;top:310.10px;font-size:15px;color:#000;">3</div><div class="t" style="left:103.40px;top:310.10px;font-size:15px;color:#000;transform:scaleX(0.9178);transform-origin:0 0;">Máy nghiền 1</div><div class="t" style="left:222.90px;top:310.10px;font-size:15px;color:#000;transform:scaleX(0.9542);transform-origin:0 0;">2.200.000.000</div><div class="t" style="left:332.20px;top:310.10px;font-size:15px;color:#000;transform:scaleX(0.9542);transform-origin:0 0;">700.000.000</div><div class="t" style="left:488.50px;top:310.10px;font-size:15px;color:#000;">5</div><div class="t" style="left:90.20px;top:334.10px;font-size:15px;color:#000;">4</div><div class="t" style="left:103.40px;top:334.10px;font-size:15px;color:#000;transform:scaleX(0.9400);transform-origin:0 0;">Máy xúc đào</div><div class="t" style="left:235.30px;top:334.10px;font-size:15px;color:#000;transform:scaleX(0.9542);transform-origin:0 0;">950.000.000</div><div class="t" style="left:390.90px;top:334.10px;font-size:15px;color:#000;">-</div><div class="t" style="left:488.50px;top:334.10px;font-size:15px;color:#000;">5</div><div class="t" style="left:90.20px;top:358.10px;font-size:15px;color:#000;">5</div><div class="t" style="left:103.40px;top:358.10px;font-size:15px;color:#000;transform:scaleX(0.9169);transform-origin:0 0;">Máy xúc lật</div><div class="t" style="left:222.90px;top:358.10px;font-size:15px;color:#000;transform:scaleX(0.9542);transform-origin:0 0;">1.000.000.000</div><div class="t" style="left:390.90px;top:358.10px;font-size:15px;color:#000;">-</div><div class="t" style="left:488.50px;top:358.10px;font-size:15px;color:#000;">5</div><div class="t" style="left:90.20px;top:382.10px;font-size:15px;color:#000;">6</div><div class="t" style="left:103.40px;top:382.10px;font-size:15px;color:#000;transform:scaleX(0.9714);transform-origin:0 0;">Ô tô Toyota</div><div class="t" style="left:222.90px;top:382.10px;font-size:15px;color:#000;transform:scaleX(0.9542);transform-origin:0 0;">1.200.000.000</div><div class="t" style="left:332.20px;top:382.10px;font-size:15px;color:#000;transform:scaleX(0.9542);transform-origin:0 0;">500.000.000</div><div class="t" style="left:488.50px;top:382.10px;font-size:15px;color:#000;">7</div><div class="t" style="left:90.20px;top:406.10px;font-size:15px;color:#000;">7</div><div class="t" style="left:103.40px;top:406.10px;font-size:15px;color:#000;transform:scaleX(0.9694);transform-origin:0 0;">Ô tô Mercedes</div><div class="t" style="left:222.90px;top:406.10px;font-size:15px;color:#000;transform:scaleX(0.9542);transform-origin:0 0;">1.500.000.000</div><div class="t" style="left:332.20px;top:406.10px;font-size:15px;color:#000;transform:scaleX(0.9542);transform-origin:0 0;">300.000.000</div><div class="t" style="left:488.50px;top:406.10px;font-size:15px;color:#000;">7</div></body></html>
